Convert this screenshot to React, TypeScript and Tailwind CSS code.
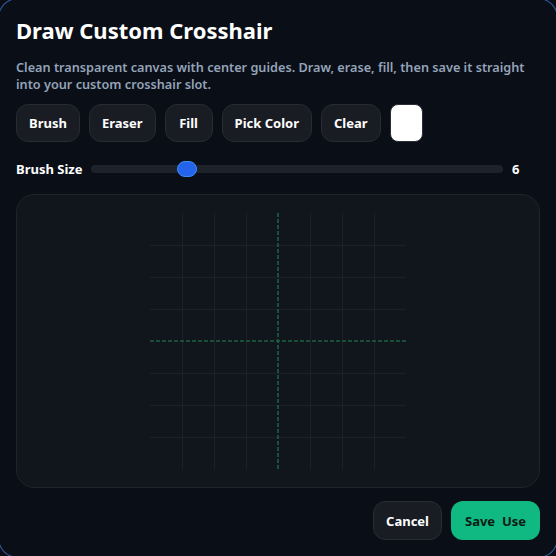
import { useState } from "react";

const TOOLS = ["Brush", "Eraser", "Fill", "Pick Color", "Clear"];
const MIN = 1;
const MAX = 24;

function GuideGrid() {
  const lines = [32, 64, 96, 160, 192, 224];
  return (
    <svg width="256" height="256" viewBox="0 0 256 256" className="block">
      {lines.map((p) => (
        <g key={p} stroke="#1c2028" strokeWidth="1" shapeRendering="crispEdges">
          <line x1={p + 0.5} y1="0" x2={p + 0.5} y2="256" />
          <line x1="0" y1={p + 0.5} x2="256" y2={p + 0.5} />
        </g>
      ))}
      <g stroke="#1d6041" strokeWidth="1.6" strokeDasharray="4 2">
        <line x1="128" y1="0" x2="128" y2="256" />
        <line x1="0" y1="128" x2="256" y2="128" />
      </g>
    </svg>
  );
}

export default function App() {
  const [tool, setTool] = useState("Brush");
  const [size] = useState(6);
  const pct = (size - MIN) / (MAX - MIN);

  return (
    <div className="h-[556px] w-[556px] overflow-hidden bg-[#0a0d15] font-['Noto_Sans',sans-serif]">
      <div className="-m-[2px] flex h-[560px] w-[560px] flex-col rounded-[20px] border border-[#3b6fc4]/80 bg-[#0a0e17] p-[17px]">
        <h2 className="text-[22px] font-bold leading-7 text-white">Draw Custom Crosshair</h2>
        <p className="mt-[15px] text-[12.7px] font-semibold leading-[17px] text-[#94a3b8]">
          Clean transparent canvas with center guides. Draw, erase, fill, then save it straight into your custom
          crosshair slot.
        </p>

        <div className="mt-[11px] flex items-center gap-[9px]">
          {TOOLS.map((t) => (
            <button
              key={t}
              type="button"
              onClick={() => setTool(t)}
              className="h-[38px] min-w-[48px] shrink-0 rounded-xl border border-[#272b33] bg-[#191c23] px-3 text-[13px] leading-[18px] font-bold text-white"
              aria-pressed={tool === t}
            >
              {t}
            </button>
          ))}
          <div className="h-[38px] w-[33px] shrink-0 rounded-lg border border-[#2a2e36] bg-white" />
        </div>

        <div className="mt-[18px] flex h-[18px] items-center gap-[9px]">
          <span className="text-[13px] leading-[18px] font-bold text-white">Brush Size</span>
          <div className="relative h-2 flex-1 rounded-full bg-[#1e222a]">
            <div
              className="absolute -top-1 h-4 w-5 rounded-full border border-[#3b8ef6] bg-[#2563eb]"
              style={{ left: `calc(${pct * 100}% - ${pct * 20}px)` }}
            />
          </div>
          <span className="w-7 text-[13px] leading-[18px] font-bold text-white">{size}</span>
        </div>

        <div className="mt-[16px] flex h-[294px] items-center justify-center rounded-[18px] border border-[#1f232b] bg-[#11151c]">
          <GuideGrid />
        </div>

        <div className="mt-auto flex justify-end gap-[9px]">
          <button
            type="button"
            className="h-[39px] rounded-xl border border-[#272b33] bg-[#191c23] px-[12px] text-[13px] leading-[18px] font-bold text-white"
          >
            Cancel
          </button>
          <button
            type="button"
            className="h-[39px] rounded-xl bg-[#10b981] px-[14px] text-[13px] leading-[18px] font-bold text-[#0b1a14]"
          >
            Save&nbsp;&nbsp;Use
          </button>
        </div>
      </div>
    </div>
  );
}
